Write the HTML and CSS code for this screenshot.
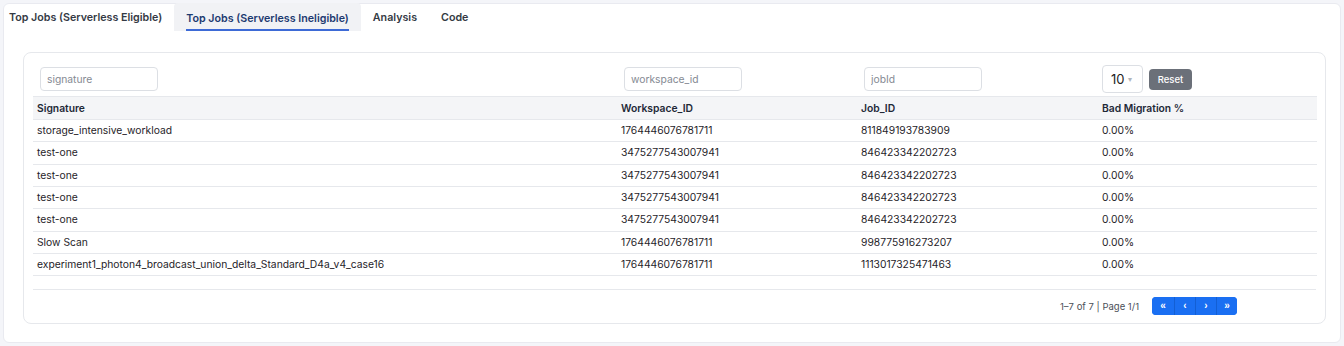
FILE: index.html
```html
<!DOCTYPE html>
<html lang="en">
<head>
  <meta charset="UTF-8">
  <meta name="viewport" content="width=device-width, initial-scale=1.0">
  <title>Top Jobs</title>
  <link rel="stylesheet" href="styles.css">
</head>
<body>
  <div class="panel">
    <!-- Tabs -->
    <nav class="tabs">
      <a href="#" class="tab first">Top Jobs (Serverless Eligible)</a>
      <a href="#" class="tab active"><span>Top Jobs (Serverless Ineligible)</span></a>
      <a href="#" class="tab">Analysis</a>
      <a href="#" class="tab">Code</a>
    </nav>

    <div class="card">
      <div class="filters">
        <div class="filter-cell"><input class="filter-input" type="text" placeholder="signature"></div>
        <div class="filter-cell"><input class="filter-input" type="text" placeholder="workspace_id"></div>
        <div class="filter-cell"><input class="filter-input" type="text" placeholder="jobId"></div>
        <div class="filter-cell controls">
          <div class="page-size">10 <span class="caret">&#9662;</span></div>
          <button class="btn-reset">Reset</button>
        </div>
      </div>

      <table class="jobs-table">
        <colgroup>
          <col class="col-sig">
          <col class="col-ws">
          <col class="col-job">
          <col class="col-bad">
        </colgroup>
        <thead>
          <tr>
            <th>Signature</th>
            <th>Workspace_ID</th>
            <th>Job_ID</th>
            <th>Bad Migration %</th>
          </tr>
        </thead>
        <tbody>
          <tr><td>storage_intensive_workload</td><td>1764446076781711</td><td>811849193783909</td><td>0.00%</td></tr>
          <tr><td>test-one</td><td>3475277543007941</td><td>846423342202723</td><td>0.00%</td></tr>
          <tr><td>test-one</td><td>3475277543007941</td><td>846423342202723</td><td>0.00%</td></tr>
          <tr><td>test-one</td><td>3475277543007941</td><td>846423342202723</td><td>0.00%</td></tr>
          <tr><td>test-one</td><td>3475277543007941</td><td>846423342202723</td><td>0.00%</td></tr>
          <tr><td>Slow Scan</td><td>1764446076781711</td><td>998775916273207</td><td>0.00%</td></tr>
          <tr><td>experiment1_photon4_broadcast_union_delta_Standard_D4a_v4_case16</td><td>1764446076781711</td><td>1113017325471463</td><td>0.00%</td></tr>
        </tbody>
      </table>

      <div class="pager">
        <span class="pager-info">1–7 of 7 | Page 1/1</span>
        <div class="pager-btns">
          <button class="pager-btn">&laquo;</button>
          <button class="pager-btn">&lsaquo;</button>
          <button class="pager-btn">&rsaquo;</button>
          <button class="pager-btn">&raquo;</button>
        </div>
      </div>
    </div>
  </div>
</body>
</html>
```

FILE: styles.css
```css
:root {
  --text-color: #1f2329;
  --muted-color: #8a8f98;
  --border-color: #e6e8ec;
  --input-border: #dcdfe4;
  --primary-color: #1a6ff2;
  --tab-active-bg: #f1f2f5;
  --font-family: 'Inter', 'Liberation Sans', sans-serif;
}

* {
  box-sizing: border-box;
  margin: 0;
  padding: 0;
}

body {
  font-family: var(--font-family);
  color: var(--text-color);
  background-color: #f4f5f9;
  padding: 3px 3px 2px 3px;
}

.panel {
  background-color: #ffffff;
  border: 1px solid #e9eaf0;
  border-radius: 6px;
  padding-bottom: 18px;
}

/* Tabs */
.tabs {
  display: flex;
  height: 27px;
}

.tab {
  display: flex;
  align-items: center;
  padding: 0 12px;
  font-size: 10.7px;
  font-weight: 600;
  color: #343a44;
  text-decoration: none;
}

.tab.first {
  padding-left: 5px;
}

.tab.active {
  background-color: var(--tab-active-bg);
  color: #1d3a70;
  border-radius: 4px 4px 0 0;
  margin-top: -1px;
  height: 28px;
}

.tab.active span {
  padding: 5px 0 4px;
  margin-top: 3px;
  border-bottom: 2px solid #3d6ad6;
}

/* Card */
.card {
  margin: 21px 14px 0 19px;
  border: 1px solid var(--border-color);
  border-radius: 8px;
  padding: 12px 9px 8px;
}

.filters {
  display: grid;
  grid-template-columns: 584px 240px 241px 219px;
  align-items: center;
  height: 28px;
  margin-bottom: 3px;
}

.filter-cell {
  padding: 0 4px;
}

.filter-input {
  width: 118px;
  height: 24px;
  margin-left: 3px;
  border: 1px solid var(--input-border);
  border-radius: 4px;
  padding: 0 6px;
  font-family: var(--font-family);
  font-size: 10.3px;
  color: var(--text-color);
  outline: none;
}

.filter-input::placeholder {
  color: #858a93;
}

.controls {
  display: flex;
  align-items: center;
  gap: 6px;
}

.page-size {
  display: flex;
  align-items: center;
  width: 41px;
  height: 28px;
  border: 1px solid var(--input-border);
  border-radius: 4px;
  padding-left: 8px;
  font-size: 13px;
  color: #222;
}

.caret {
  font-size: 8px;
  color: #b0b4ba;
  margin-left: 3px;
}

.btn-reset {
  width: 43px;
  height: 21px;
  border: none;
  border-radius: 4px;
  background-color: #6b7079;
  color: #ffffff;
  font-family: var(--font-family);
  font-size: 9.5px;
  font-weight: 500;
}

/* Table */
.jobs-table {
  width: 1284px;
  border-collapse: collapse;
  table-layout: fixed;
  font-size: 10.3px;
}

.col-sig { width: 584px; }
.col-ws { width: 240px; }
.col-job { width: 241px; }
.col-bad { width: 219px; }

.jobs-table th,
.jobs-table td {
  text-align: left;
  padding: 4px 4px;
  line-height: 13.33px;
  border-bottom: 1px solid var(--border-color);
  white-space: nowrap;
}

.jobs-table th {
  background-color: #f4f5f7;
  font-weight: 600;
  color: #1f2937;
  line-height: 14px;
  border-top: 1px solid var(--border-color);
}

/* Pager */
.pager {
  display: flex;
  justify-content: flex-end;
  align-items: center;
  margin-top: 13px;
  border-top: 1px solid var(--border-color);
  padding: 7px 79px 0 0;
}

.pager-info {
  font-size: 9.5px;
  color: #4b5058;
  margin-right: 13px;
}

.pager-btns {
  display: flex;
  background-color: var(--primary-color);
  border-radius: 4px;
  overflow: hidden;
}

.pager-btn {
  width: 21px;
  height: 18px;
  border: none;
  border-left: 1px solid #135fd4;
  background-color: var(--primary-color);
  color: #ffffff;
  font-size: 10px;
  font-weight: 700;
  line-height: 18px;
}

.pager-btn:first-child {
  border-left: none;
  width: 22px;
}
```
